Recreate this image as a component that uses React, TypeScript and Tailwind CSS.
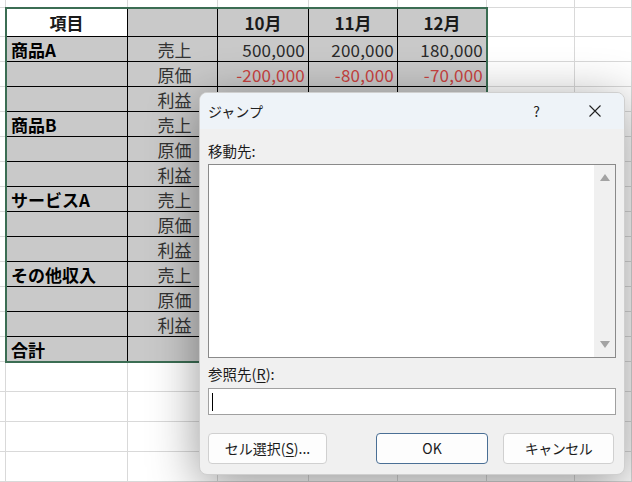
const FONT = { fontFamily: '"Noto Sans CJK JP", "Noto Sans", sans-serif' };

type Row = [string, string, string, string, string];

const tableRows: Row[] = [
  ['商品A', '売上', '500,000', '200,000', '180,000'],
  ['', '原価', '-200,000', '-80,000', '-70,000'],
  ['', '利益', '', '', ''],
  ['商品B', '売上', '', '', ''],
  ['', '原価', '', '', ''],
  ['', '利益', '', '', ''],
  ['サービスA', '売上', '', '', ''],
  ['', '原価', '', '', ''],
  ['', '利益', '', '', ''],
  ['その他収入', '売上', '', '', ''],
  ['', '原価', '', '', ''],
  ['', '利益', '', '', ''],
  ['合計', '', '', '', ''],
];

const COLS = 8;
const ROWS = 19;

function Sheet() {
  const gridCells = [];
  for (let r = 0; r < ROWS; r++) {
    for (let c = 0; c < COLS; c++) {
      gridCells.push(
        <div key={`${r}-${c}`} className="border-r border-b border-[#d9d9d9] bg-white" />
      );
    }
  }

  return (
    <div className="grid h-[482px] w-[632px] grid-cols-[6px_122px_90px_91px_89px_89px_88px_57px] grid-rows-[8px_29px_repeat(13,25px)_30px_30px_30px_30px] overflow-hidden">
      {gridCells}

      <div
        className="col-start-2 col-end-7 row-start-2 row-end-16 grid grid-cols-[122px_90px_91px_89px_89px] grid-rows-[29px_repeat(13,25px)] bg-[#c9c9c9] outline-2 outline-offset-[-1px] outline-[#3b6d53] text-[17px] leading-none text-[#1a1a1a]"
        style={FONT}
      >
        <div className="flex items-center justify-center border-r border-b border-black bg-white font-bold">項目</div>
        <div className="border-r border-b border-black" />
        {['10月', '11月', '12月'].map((m) => (
          <div key={m} className="flex items-center justify-center border-r border-b border-black font-bold">
            {m}
          </div>
        ))}

        {tableRows.map((row, i) => (
          <div key={i} className="contents">
            <div className="flex items-center border-r border-b border-black pl-[5px] font-bold text-black">{row[0]}</div>
            <div className="flex items-center justify-center border-r border-b border-black pl-[4px] text-[#333]">{row[1]}</div>
            {row.slice(2).map((v, j) => (
              <div
                key={j}
                className={`flex items-center justify-end border-r border-b border-black pr-[3px] tracking-[0.2px] ${
                  v.startsWith('-') ? 'text-[#c8423f]' : 'text-[#2a2a2a]'
                }`}
              >
                {v}
              </div>
            ))}
          </div>
        ))}
      </div>
    </div>
  );
}

function Triangle({ down }: { down?: boolean }) {
  return (
    <svg width="10" height="7" viewBox="0 0 10 7" className="block">
      <path d={down ? 'M0 0 L10 0 L5 7 Z' : 'M0 7 L10 7 L5 0 Z'} fill="#a3a3a3" />
    </svg>
  );
}

function Dialog() {
  return (
    <div
      className="absolute left-[199px] top-[92px] flex h-[383px] w-[426px] flex-col overflow-hidden rounded-[8px] border border-[#cfcfcf] bg-[#f0f0f0] text-[14px] text-[#1b1b1b] shadow-[0_10px_50px_rgba(0,0,0,0.42)]"
      style={FONT}
    >
      <div className="flex h-[36px] items-center bg-[#eef3f8] pl-[8px]">
        <span className="flex-1 text-[14px] text-[#222]">ジャンプ</span>
        <span className="mr-[49px] text-[14px] text-[#222]">?</span>
        <svg width="12" height="12" viewBox="0 0 12 12" className="mr-[23px]">
          <path d="M0.5 0.5 L11.5 11.5 M11.5 0.5 L0.5 11.5" stroke="#222" strokeWidth="1.1" />
        </svg>
      </div>

      <div className="flex flex-1 flex-col px-[8px] pt-[12px]">
        <div className="h-[20px] text-[14.5px] leading-[20px]">移動先:</div>
        <div className="mt-[3px] flex h-[194px] w-[408px] border border-[#8a8a8a] bg-white">
          <div className="flex-1" />
          <div className="flex w-[21px] flex-col items-center justify-between bg-[#f0f0f0] pt-[9px] pb-[9px]">
            <Triangle />
            <Triangle down />
          </div>
        </div>

        <div className="mt-[6px] h-[20px] text-[14.5px] leading-[20px]">
          参照先(<span className="underline underline-offset-2">R</span>):
        </div>
        <div className="mt-[4px] flex h-[27px] w-[408px] items-center border border-[#a0a0a0] bg-white pl-[3px]">
          <div className="h-[18px] w-[1px] bg-black" />
        </div>

        <div className="mt-[18px] flex pr-[2px]">
          <button className="h-[31px] w-[119px] rounded-[4px] border border-[#d0d0d0] bg-[#fdfdfd] text-[14px]">
            セル選択(<span className="underline underline-offset-2">S</span>)...
          </button>
          <div className="flex-1" />
          <button className="h-[31px] w-[112px] rounded-[4px] border border-[#4a6f95] bg-[#fdfdfd] text-[14px]">
            OK
          </button>
          <button className="ml-[15px] h-[31px] w-[111px] rounded-[4px] border border-[#d0d0d0] bg-[#fdfdfd] text-[14px] tracking-[-0.5px]">
            キャンセル
          </button>
        </div>
      </div>
    </div>
  );
}

export default function App() {
  return (
    <div className="relative h-[482px] w-[632px] overflow-hidden bg-white">
      <Sheet />
      <Dialog />
    </div>
  );
}
